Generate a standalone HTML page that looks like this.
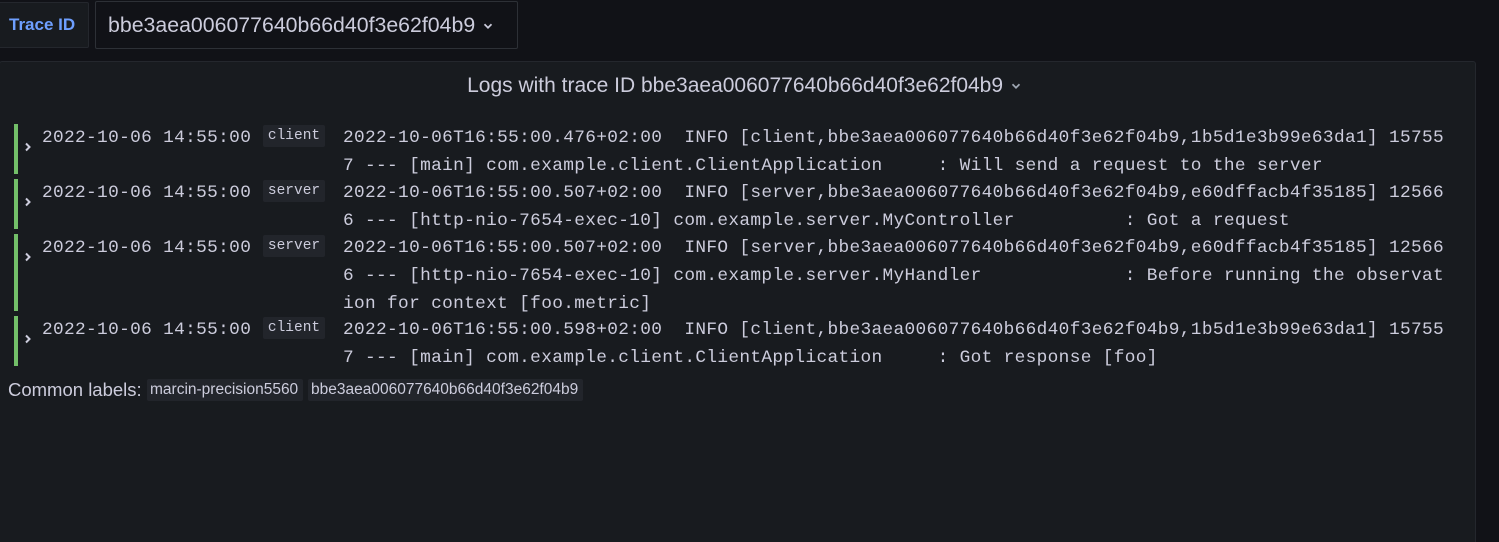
<!DOCTYPE html>
<html><head><meta charset="utf-8"><style>
*{margin:0;padding:0;box-sizing:border-box}
html,body{width:1499px;height:542px;overflow:hidden}
body{background:#111217;position:relative;font-family:"Liberation Sans",sans-serif;color:#ccccdc}
.a{position:absolute;white-space:pre}
.m{font-family:"Liberation Mono",monospace;font-size:17.8px;color:#ccccdc;line-height:28px;letter-spacing:0.34px}
.bar{position:absolute;left:14px;width:4px;background:#73bf69}
.chev{position:absolute;left:22px;width:12px;height:12px}
.lab{position:absolute;left:263px;width:62px;height:22px;background:#22252b;border-radius:2px;font-family:"Liberation Mono",monospace;font-size:14.5px;color:#ccccdc;text-align:center;line-height:22px}
.cl{position:absolute;top:379px;height:22px;background:#22252b;border-radius:2px;font-size:15.5px;line-height:22px;padding:0 3px;white-space:nowrap}
</style></head><body>
<div class="a" style="left:-2px;top:2px;width:91px;height:46px;background:#181b1f;border:1px solid #24272d;border-radius:2px;color:#6e9fff;font-weight:bold;font-size:17px;line-height:44px;padding-left:10px">Trace ID</div>
<div class="a" style="left:95px;top:1px;width:423px;height:48px;background:#111217;border:1px solid #2d3036;border-radius:2px;font-size:21.3px;line-height:46px;padding-left:12px;color:#ccccdc">bbe3aea006077640b66d40f3e62f04b9 <svg width="14" height="14" viewBox="0 0 12 12" style="vertical-align:middle"><path d="M3 4.5l3 3 3-3" stroke="#ccccdc" stroke-width="1.5" fill="none"/></svg></div>
<div style="position:absolute;left:-1px;top:61px;width:1477px;height:490px;background:#181b1f;border:1px solid #24272d;border-radius:3px"></div>
<div class="a" style="left:0;width:1490px;top:74px;text-align:center;font-size:21px;line-height:24px;color:#ccccdc">Logs with trace ID bbe3aea006077640b66d40f3e62f04b9 <svg width="14" height="14" viewBox="0 0 12 12" style="vertical-align:middle"><path d="M3 4.5l3 3 3-3" stroke="#9fa7b3" stroke-width="1.5" fill="none"/></svg></div>

<div class="bar" style="top:124px;height:50px"></div>
<div class="bar" style="top:179px;height:50px"></div>
<div class="bar" style="top:234px;height:77px"></div>
<div class="bar" style="top:316px;height:50px"></div>

<svg class="chev" style="top:141px" viewBox="0 0 12 12"><path d="M4 2.5l3.5 3.5-3.5 3.5" stroke="#ccccdc" stroke-width="2" fill="none"/></svg>
<svg class="chev" style="top:196px" viewBox="0 0 12 12"><path d="M4 2.5l3.5 3.5-3.5 3.5" stroke="#ccccdc" stroke-width="2" fill="none"/></svg>
<svg class="chev" style="top:251px" viewBox="0 0 12 12"><path d="M4 2.5l3.5 3.5-3.5 3.5" stroke="#ccccdc" stroke-width="2" fill="none"/></svg>
<svg class="chev" style="top:333px" viewBox="0 0 12 12"><path d="M4 2.5l3.5 3.5-3.5 3.5" stroke="#ccccdc" stroke-width="2" fill="none"/></svg>

<div class="a m" style="left:42px;top:124px">2022-10-06 14:55:00</div>
<div class="a m" style="left:42px;top:179px">2022-10-06 14:55:00</div>
<div class="a m" style="left:42px;top:234px">2022-10-06 14:55:00</div>
<div class="a m" style="left:42px;top:316px">2022-10-06 14:55:00</div>

<div class="lab" style="top:125px">client</div>
<div class="lab" style="top:180px">server</div>
<div class="lab" style="top:235px">server</div>
<div class="lab" style="top:317px">client</div>

<div class="a m" style="left:343px;top:124px">2022-10-06T16:55:00.476+02:00  INFO [client,bbe3aea006077640b66d40f3e62f04b9,1b5d1e3b99e63da1] 15755
7 --- [main] com.example.client.ClientApplication     : Will send a request to the server</div>
<div class="a m" style="left:343px;top:179px">2022-10-06T16:55:00.507+02:00  INFO [server,bbe3aea006077640b66d40f3e62f04b9,e60dffacb4f35185] 12566
6 --- [http-nio-7654-exec-10] com.example.server.MyController          : Got a request</div>
<div class="a m" style="left:343px;top:234px">2022-10-06T16:55:00.507+02:00  INFO [server,bbe3aea006077640b66d40f3e62f04b9,e60dffacb4f35185] 12566
6 --- [http-nio-7654-exec-10] com.example.server.MyHandler             : Before running the observat
ion for context [foo.metric]</div>
<div class="a m" style="left:343px;top:316px">2022-10-06T16:55:00.598+02:00  INFO [client,bbe3aea006077640b66d40f3e62f04b9,1b5d1e3b99e63da1] 15755
7 --- [main] com.example.client.ClientApplication     : Got response [foo]</div>

<div class="a" style="left:8px;top:379px;font-size:18.5px;line-height:22px;color:#ccccdc">Common labels:</div>
<div class="cl" style="left:147px;width:156px">marcin-precision5560</div>
<div class="cl" style="left:308px;width:275px">bbe3aea006077640b66d40f3e62f04b9</div>
</body></html>
